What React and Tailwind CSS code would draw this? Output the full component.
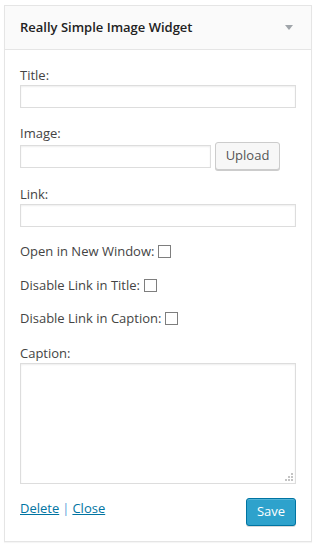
import React from 'react';

const font = { fontFamily: '"Open Sans", "Noto Sans", sans-serif' };

const Field = ({ label, className = '' }) => (
  <div className={className}>
    <label className="block leading-[18px]">{label}</label>
    <input
      type="text"
      className="block mt-[1px] w-[276px] h-[23px] border border-[#dddddd] bg-white outline-none shadow-[inset_0_1px_2px_rgba(0,0,0,0.07)]"
    />
  </div>
);

const Check = ({ label, className = '' }) => (
  <div className={`flex items-center leading-[18px] ${className}`}>
    <span>{label}</span>
    <span className="ml-[4px] w-[13px] h-[13px] border border-[#7e7e7e] bg-white" />
  </div>
);

const Grip = () => (
  <svg width="9" height="9" viewBox="0 0 9 9" className="absolute right-[2px] bottom-[2px]">
    <rect x="7" y="1" width="2" height="2" fill="#c4c4c4" />
    <rect x="4" y="4" width="2" height="2" fill="#c4c4c4" />
    <rect x="7" y="4" width="2" height="2" fill="#c4c4c4" />
    <rect x="1" y="7" width="2" height="2" fill="#c4c4c4" />
    <rect x="4" y="7" width="2" height="2" fill="#c4c4c4" />
    <rect x="7" y="7" width="2" height="2" fill="#c4c4c4" />
  </svg>
);

export default function App() {
  return (
    <div className="min-h-[547px] bg-white pt-[5px] pl-[4px]" style={font}>
      <div className="w-[308px] border border-[#e5e5e5] bg-white text-[13px] text-[#444444] shadow-[0_1px_1px_rgba(0,0,0,0.04)]">
        {/* header */}
        <div className="h-[44px] flex items-center justify-between pl-[15px] pr-[18px] bg-[#fafafa] border-b border-[#e5e5e5]">
          <h3 className="text-[13px] font-semibold text-[#222222]">Really Simple Image Widget</h3>
          <span className="w-0 h-0 border-l-[4px] border-r-[4px] border-t-[5px] border-l-transparent border-r-transparent border-t-[#a0a5aa]" />
        </div>

        {/* body */}
        <div className="px-[15px] pt-[16px] pb-[15px]">
          <Field label="Title:" />

          <div className="mt-[16px]">
            <label className="block leading-[18px]">Image:</label>
            <div className="flex items-center">
              <input
                type="text"
                className="w-[191px] h-[23px] border border-[#dddddd] bg-white outline-none shadow-[inset_0_1px_2px_rgba(0,0,0,0.07)]"
              />
              <button className="ml-[4px] w-[65px] h-[28px] rounded-[3px] border border-[#cccccc] bg-[#f7f7f7] text-[#555555] text-[13px] shadow-[0_1px_0_#cccccc]">
                Upload
              </button>
            </div>
          </div>

          <Field label="Link:" className="mt-[15px]" />

          <Check label="Open in New Window:" className="mt-[15px]" />
          <Check label="Disable Link in Title:" className="mt-[16px]" />
          <Check label="Disable Link in Caption:" className="mt-[15px]" />

          <div className="mt-[17px]">
            <label className="block leading-[18px]">Caption:</label>
            <div className="relative mt-[1px] w-[276px] h-[121px] border border-[#dddddd] bg-white shadow-[inset_0_1px_2px_rgba(0,0,0,0.07)]">
              <Grip />
            </div>
          </div>

          <div className="mt-[14px] flex justify-between items-start">
            <div className="leading-[18px] pt-[1px]">
              <a href="#" className="text-[#0074a2] underline">Delete</a>
              <span className="mx-[3px] text-[#5b9dd9]">|</span>
              <a href="#" className="text-[#0074a2] underline">Close</a>
            </div>
            <button className="w-[50px] h-[28px] rounded-[3px] border border-[#0074a2] bg-[#2ea2cc] text-white text-[13px] shadow-[inset_0_1px_0_rgba(120,200,230,0.5),0_1px_0_rgba(0,0,0,0.15)]">
              Save
            </button>
          </div>
        </div>
      </div>
    </div>
  );
}
